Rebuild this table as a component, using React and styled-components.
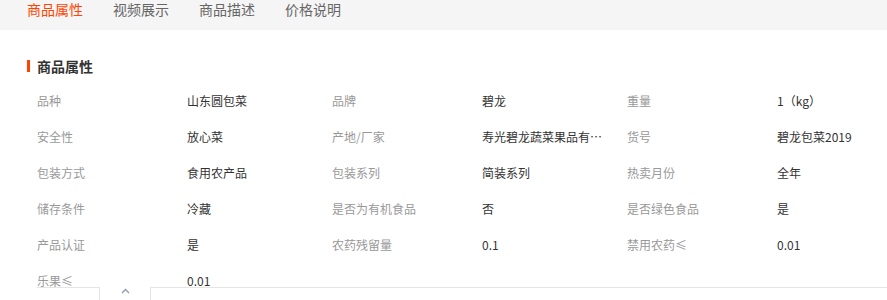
import React from "react";
import styled, { createGlobalStyle } from "styled-components";

const Global = createGlobalStyle`
  html, body { margin: 0; padding: 0; background: #fff; }
  body { font-family: "Noto Sans CJK SC", "Noto Sans", sans-serif; overflow: hidden; }
`;

const Page = styled.div`
  width: 887px;
  height: 300px;
  overflow: hidden;
  background: #fff;
`;

const TabBar = styled.div`
  display: flex;
  gap: 30px;
  height: 30px;
  padding-left: 27px;
  background: #f5f5f5;
`;

const Tab = styled.div`
  font-size: 14px;
  line-height: 16px;
  padding-top: 1px;
  color: ${(p) => (p.$active ? "#ff4400" : "#666")};
`;

const Section = styled.div`
  padding: 26px 0 0 27px;
`;

const Title = styled.div`
  display: flex;
  align-items: center;
  gap: 7px;
  font-size: 14px;
  font-weight: bold;
  line-height: 20px;
  color: #333;
  &::before {
    content: "";
    width: 3px;
    height: 12px;
    background: #ff4400;
  }
`;

const Grid = styled.div`
  display: grid;
  grid-template-columns: 150px 145px 150px 145px 150px 1fr;
  row-gap: 20px;
  margin-top: 17px;
  padding-left: 10px;
`;

const Label = styled.div`
  font-size: 12px;
  line-height: 16px;
  color: #999;
  white-space: nowrap;
`;

const Value = styled.div`
  font-size: 12px;
  line-height: 16px;
  color: #333;
  max-width: 124px;
  white-space: nowrap;
  overflow: hidden;
  text-overflow: ellipsis;
`;

const Fold = styled.div`
  display: flex;
  margin: -2px 0 0 10px;
  height: 20px;
`;

const FoldSide = styled.div`
  width: ${(p) => (p.$grow ? "auto" : "62px")};
  flex: ${(p) => (p.$grow ? 1 : "none")};
  border-top: 1px solid #e5e5e5;
  ${(p) => (p.$grow ? "border-left: 1px solid #e5e5e5;" : "border-right: 1px solid #e5e5e5;")}
`;

const FoldArrow = styled.div`
  width: 50px;
  display: flex;
  justify-content: center;
  padding-top: 1px;
`;

const rows = [
  ["品种", "山东圆包菜", "品牌", "碧龙", "重量", "1（kg）"],
  ["安全性", "放心菜", "产地/厂家", "寿光碧龙蔬菜果品有限公司", "货号", "碧龙包菜2019"],
  ["包装方式", "食用农产品", "包装系列", "简装系列", "热卖月份", "全年"],
  ["储存条件", "冷藏", "是否为有机食品", "否", "是否绿色食品", "是"],
  ["产品认证", "是", "农药残留量", "0.1", "禁用农药≤", "0.01"],
  ["乐果≤", "0.01"],
];

export default function App() {
  return (
    <Page>
      <Global />
      <TabBar>
        <Tab $active>商品属性</Tab>
        <Tab>视频展示</Tab>
        <Tab>商品描述</Tab>
        <Tab>价格说明</Tab>
      </TabBar>
      <Section>
        <Title>商品属性</Title>
        <Grid>
          {rows.map((r, i) =>
            r.map((t, j) =>
              j % 2 === 0 ? (
                <Label key={`${i}-${j}`}>{t}</Label>
              ) : (
                <Value key={`${i}-${j}`}>{t}</Value>
              )
            )
          )}
        </Grid>
        <Fold>
          <FoldSide />
          <FoldArrow>
            <svg width="9" height="6" viewBox="0 0 9 6">
              <path d="M1 5 L4.5 1.5 L8 5" fill="none" stroke="#8a9bb0" strokeWidth="1.3" />
            </svg>
          </FoldArrow>
          <FoldSide $grow />
        </Fold>
      </Section>
    </Page>
  );
}
